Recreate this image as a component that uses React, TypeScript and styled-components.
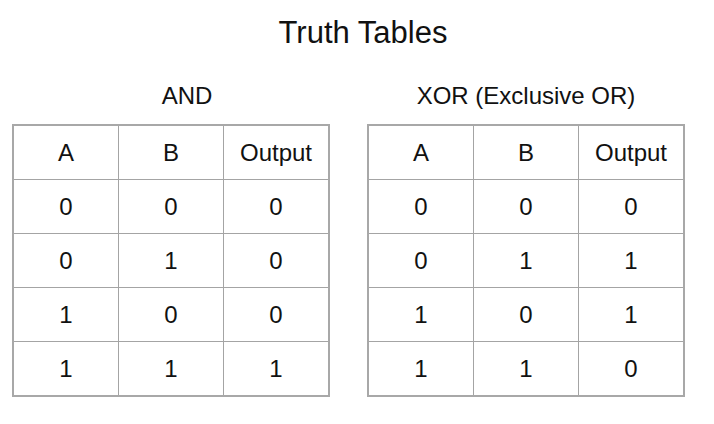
import React from "react";
import styled, { createGlobalStyle } from "styled-components";

const GlobalStyle = createGlobalStyle`
  html, body {
    margin: 0;
    padding: 0;
    background: #ffffff;
  }
  body {
    font-family: "Liberation Sans", Arial, sans-serif;
    color: #111111;
  }
`;

const Page = styled.div`
  width: 714px;
  height: 424px;
  box-sizing: border-box;
  padding-top: 15px;
  display: flex;
  flex-direction: column;
`;

const Title = styled.h1`
  margin: 0;
  padding-left: 12px;
  font-size: 31px;
  line-height: 36px;
  font-weight: 400;
  text-align: center;
`;

const Tables = styled.div`
  margin-top: 31px;
  padding-left: 12px;
  display: flex;
  gap: 37px;
  align-items: flex-start;
`;

const Block = styled.section`
  display: flex;
  flex-direction: column;
  width: 318px;
`;

const Caption = styled.h2<{ $shift?: number }>`
  margin: 0 0 14px 0;
  padding-left: ${(p) => (p.$shift ?? 0) * 2}px;
  font-size: 24px;
  line-height: 28px;
  font-weight: 400;
  text-align: center;
`;

const Grid = styled.div`
  display: grid;
  grid-template-columns: repeat(3, 104px);
  grid-auto-rows: 53px;
  gap: 1px;
  background: #a4a4a4;
  border: 2px solid #a8a8a8;
`;

const Cell = styled.div`
  background: #ffffff;
  display: flex;
  align-items: center;
  justify-content: center;
  padding-top: 1px;
  box-sizing: border-box;
  font-size: 24px;
  line-height: 28px;
`;

type Row = [string, string, string];

const andRows: Row[] = [
  ["0", "0", "0"],
  ["0", "1", "0"],
  ["1", "0", "0"],
  ["1", "1", "1"],
];

const xorRows: Row[] = [
  ["0", "0", "0"],
  ["0", "1", "1"],
  ["1", "0", "1"],
  ["1", "1", "0"],
];

const TruthTable: React.FC<{ title: string; rows: Row[]; shift?: number }> = ({
  title,
  rows,
  shift,
}) => (
  <Block>
    <Caption $shift={shift}>{title}</Caption>
    <Grid role="table">
      {["A", "B", "Output"].map((h) => (
        <Cell key={h} role="columnheader">
          {h}
        </Cell>
      ))}
      {rows.map((r, i) =>
        r.map((v, j) => (
          <Cell key={`${i}-${j}`} role="cell">
            {v}
          </Cell>
        ))
      )}
    </Grid>
  </Block>
);

export default function App() {
  return (
    <>
      <GlobalStyle />
      <Page>
        <Title>Truth Tables</Title>
        <Tables>
          <TruthTable title="AND" rows={andRows} shift={16} />
          <TruthTable title="XOR (Exclusive OR)" rows={xorRows} />
        </Tables>
      </Page>
    </>
  );
}
